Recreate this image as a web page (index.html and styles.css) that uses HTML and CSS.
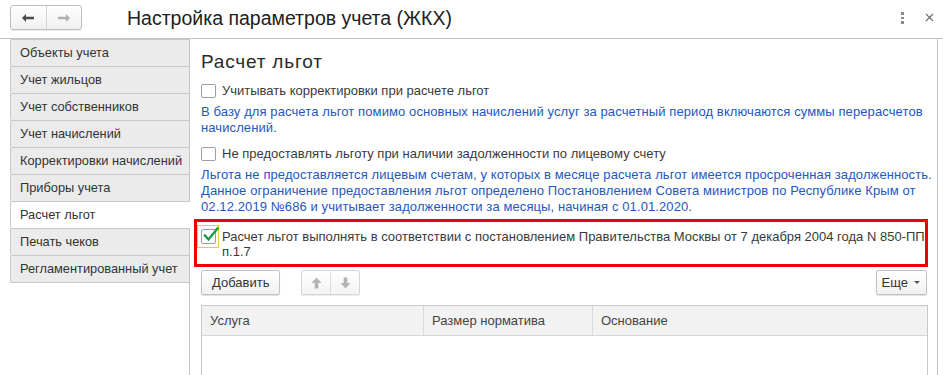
FILE: index.html
```html
<!DOCTYPE html>
<html lang="ru">
<head>
<meta charset="utf-8">
<title>Настройка параметров учета (ЖКХ)</title>
<link rel="stylesheet" href="styles.css">
</head>
<body>
<div class="window">
  <header class="header">
    <div class="nav">
      <button class="nav-btn" type="button" aria-label="Назад">
        <svg width="14" height="10" viewBox="0 0 14 10"><path d="M1 5 L5 1 L5 3.8 L13 3.8 L13 6.2 L5 6.2 L5 9 Z" fill="#4a4a4a"/></svg>
      </button>
      <button class="nav-btn" type="button" aria-label="Вперед">
        <svg width="14" height="10" viewBox="0 0 14 10"><path d="M13 5 L9 1 L9 3.8 L1 3.8 L1 6.2 L9 6.2 L9 9 Z" fill="#b0b0b0"/></svg>
      </button>
    </div>
    <div class="title">Настройка параметров учета (ЖКХ)</div>
    <div class="tools">
      <span class="dots"><i></i><i></i><i></i></span>
      <svg class="close" width="9" height="9" viewBox="0 0 9 9"><path d="M1 1 L8 8 M8 1 L1 8" stroke="#6a6a6a" stroke-width="1.1" fill="none"/></svg>
    </div>
  </header>

  <div class="main">
    <nav class="tabs">
      <div class="tab">Объекты учета</div>
      <div class="tab">Учет жильцов</div>
      <div class="tab">Учет собственников</div>
      <div class="tab">Учет начислений</div>
      <div class="tab">Корректировки начислений</div>
      <div class="tab">Приборы учета</div>
      <div class="tab tab-active">Расчет льгот</div>
      <div class="tab">Печать чеков</div>
      <div class="tab tab-last">Регламентированный учет</div>
    </nav>

    <section class="panel">
      <h1 class="heading">Расчет льгот</h1>

      <label class="check-row row-1">
        <span class="box"></span>
        <span class="label">Учитывать корректировки при расчете льгот</span>
      </label>
      <p class="note note-1">В базу для расчета льгот помимо основных начислений услуг за расчетный период включаются суммы перерасчетов начислений.</p>

      <label class="check-row row-2">
        <span class="box"></span>
        <span class="label">Не предоставлять льготу при наличии задолженности по лицевому счету</span>
      </label>
      <p class="note note-2">Льгота не предоставляется лицевым счетам, у которых в месяце расчета льгот имеется просроченная задолженность. Данное ограничение предоставления льгот определено Постановлением Совета министров по Республике Крым от 02.12.2019 №686 и учитывает задолженности за месяцы, начиная с 01.01.2020.</p>

      <div class="highlight">
        <span class="focus">
          <span class="box box-checked">
            <svg class="tick" width="18" height="18" viewBox="0 0 18 18"><path d="M3 9.5 L6.5 13.5 L15.5 2.5" stroke="#1e9a45" stroke-width="2.4" fill="none" stroke-linecap="square" stroke-linejoin="miter"/></svg>
          </span>
        </span>
        <span class="label label-checked">Расчет льгот выполнять в соответствии с постановлением Правительства Москвы от 7 декабря 2004 года N 850-ПП п.1.7</span>
      </div>

      <div class="toolbar">
        <button class="btn" type="button">Добавить</button>
        <div class="btn-group">
          <button class="btn-icon" type="button" aria-label="Вверх">
            <svg width="11" height="12" viewBox="0 0 11 12"><path d="M5.5 0.5 L10.5 6 L7.3 6 L7.3 11.5 L3.7 11.5 L3.7 6 L0.5 6 Z" fill="#b4b4b4"/></svg>
          </button>
          <button class="btn-icon" type="button" aria-label="Вниз">
            <svg width="11" height="12" viewBox="0 0 11 12"><path d="M5.5 11.5 L10.5 6 L7.3 6 L7.3 0.5 L3.7 0.5 L3.7 6 L0.5 6 Z" fill="#b4b4b4"/></svg>
          </button>
        </div>
        <button class="btn btn-more" type="button">Еще <span class="caret"></span></button>
      </div>

      <div class="table">
        <div class="thead">
          <div class="th th-1">Услуга</div>
          <div class="th th-2">Размер норматива</div>
          <div class="th th-3">Основание</div>
        </div>
        <div class="tbody"></div>
      </div>
    </section>
  </div>
</div>
</body>
</html>
```

FILE: styles.css
```css
* { box-sizing: border-box; }

html, body {
  margin: 0;
  padding: 0;
  background: #ffffff;
  overflow: hidden;
}

body {
  font-family: "Liberation Sans", Arial, sans-serif;
  font-size: 13px;
  color: #3a3a3a;
  width: 943px;
  height: 375px;
}

.window {
  display: flex;
  flex-direction: column;
  height: 375px;
  overflow: hidden;
}

/* header */
.header {
  height: 39px;
  flex: none;
  display: flex;
  align-items: flex-start;
  border-bottom: 1px solid #c4c4c4;
}

.nav {
  display: flex;
  margin-left: 10px;
  margin-top: 5px;
  height: 25px;
  width: 72px;
  border: 1px solid #bdbdbd;
  border-radius: 3px;
  background: linear-gradient(#ffffff, #f0f0f0);
  box-shadow: 0 1px 1px rgba(0,0,0,0.08);
  overflow: hidden;
}

.nav-btn {
  flex: 1;
  border: 0;
  padding: 0;
  margin: 0;
  background: transparent;
  display: flex;
  align-items: center;
  justify-content: center;
}

.nav-btn + .nav-btn { border-left: 1px solid #d4d4d4; }

.title {
  margin-left: 45px;
  margin-top: 7px;
  font-size: 19.5px;
  line-height: 23px;
  color: #222222;
}

.tools {
  margin-left: auto;
  margin-right: 9px;
  margin-top: 12px;
  display: flex;
  align-items: flex-start;
  gap: 21px;
}

.dots {
  display: flex;
  flex-direction: column;
  gap: 2px;
  width: 3px;
}

.dots i {
  display: block;
  width: 3px;
  height: 2.5px;
  background: #8a8a8a;
}

.close { margin-top: 0.5px; }

/* main area */
.main {
  flex: 1;
  display: flex;
  min-height: 0;
}

.tabs {
  width: 179px;
  margin-left: 10px;
  flex: none;
  display: flex;
  flex-direction: column;
}

.tab {
  height: 27px;
  line-height: 26px;
  padding-left: 9px;
  border-top: 1px solid #c8c8c8;
  border-left: 1px solid #c8c8c8;
  border-radius: 2px 0 0 2px;
  background: #ebebeb;
  color: #333333;
  font-size: 12.8px;
  white-space: nowrap;
}

.tab-last {
  height: 28px;
  border-bottom: 1px solid #c8c8c8;
}

.tab-active {
  background: #ffffff;
  margin-right: -1px;
  position: relative;
  z-index: 1;
}

.panel {
  flex: 1;
  margin-right: 5px;
  border-left: 1px solid #c4c4c4;
  border-right: 1px solid #c4c4c4;
  padding: 12px 9px 0 11px;
  min-width: 0;
  display: flex;
  flex-direction: column;
}

.heading {
  margin: 0;
  font-size: 19px;
  line-height: 22px;
  letter-spacing: 0.8px;
  font-weight: normal;
  color: #2a2a2a;
}

.check-row {
  display: flex;
  align-items: center;
  height: 16px;
}

.row-1 { margin-top: 10px; }
.row-2 { margin-top: 10px; }

.box {
  width: 15px;
  height: 14px;
  border: 1px solid #9e9e9e;
  border-radius: 2px;
  background: #ffffff;
  flex: none;
  display: block;
}

.label {
  margin-left: 6px;
  line-height: 16px;
  color: #3a3a3a;
}

.note {
  margin: 5px -8px 0 0;
  font-size: 13px;
  letter-spacing: 0.1px;
  line-height: 16px;
  color: #2457c0;
}

/* highlighted row */
.highlight {
  margin: 4px 0 0 -7px;
  border: 3px solid #f00000;
  display: flex;
  align-items: flex-start;
  padding: 3px 0 5px 0;
  flex: none;
}

.focus {
  flex: none;
  display: block;
  border: 1px solid #f0c545;
  padding: 3px 2px 3px 3px;
}

.box-checked {
  position: relative;
  width: 15px;
  height: 15px;
}

.tick {
  position: absolute;
  left: 0;
  top: -4px;
}

.label-checked {
  margin-left: 3px;
  padding-top: 4px;
  line-height: 15px;
}

/* toolbar */
.toolbar {
  display: flex;
  align-items: center;
  margin-top: 3px;
  height: 25px;
  flex: none;
}

.btn {
  height: 25px;
  padding: 0 10px;
  border: 1px solid #c2c2c2;
  border-radius: 2px;
  background: linear-gradient(#ffffff, #f1f1f1);
  box-shadow: 0 1px 1px rgba(0,0,0,0.12);
  font-family: "Liberation Sans", Arial, sans-serif;
  font-size: 13px;
  color: #333333;
  margin: 0;
}

.btn-group {
  display: flex;
  margin-left: 21px;
  width: 59px;
  height: 25px;
  border: 1px solid #d6d6d6;
  border-radius: 2px;
  background: linear-gradient(#ffffff, #f4f4f4);
  box-shadow: 0 1px 1px rgba(0,0,0,0.08);
  overflow: hidden;
}

.btn-icon {
  flex: 1;
  border: 0;
  padding: 0;
  margin: 0;
  background: transparent;
  display: flex;
  align-items: center;
  justify-content: center;
}

.btn-icon + .btn-icon { border-left: 1px solid #dedede; }

.btn-more {
  margin-left: auto;
  margin-right: 1px;
  padding: 0 6px 0 5px;
  display: flex;
  align-items: center;
  gap: 6px;
}

.caret {
  width: 0;
  height: 0;
  border-left: 3px solid transparent;
  border-right: 3px solid transparent;
  border-top: 3px solid #555555;
  display: block;
}

/* table */
.table {
  margin-top: 10px;
  border: 1px solid #c8c8c8;
  border-bottom: 0;
  flex: 1;
  min-height: 0;
}

.thead {
  display: flex;
  height: 30px;
  background: #f2f2f2;
  border-bottom: 1px solid #d6d6d6;
}

.th {
  line-height: 29px;
  padding-left: 8px;
  color: #444444;
  border-right: 1px solid #dadada;
}

.th-1 { width: 222px; }
.th-2 { width: 169px; }
.th-3 { flex: 1; border-right: 0; }
```
